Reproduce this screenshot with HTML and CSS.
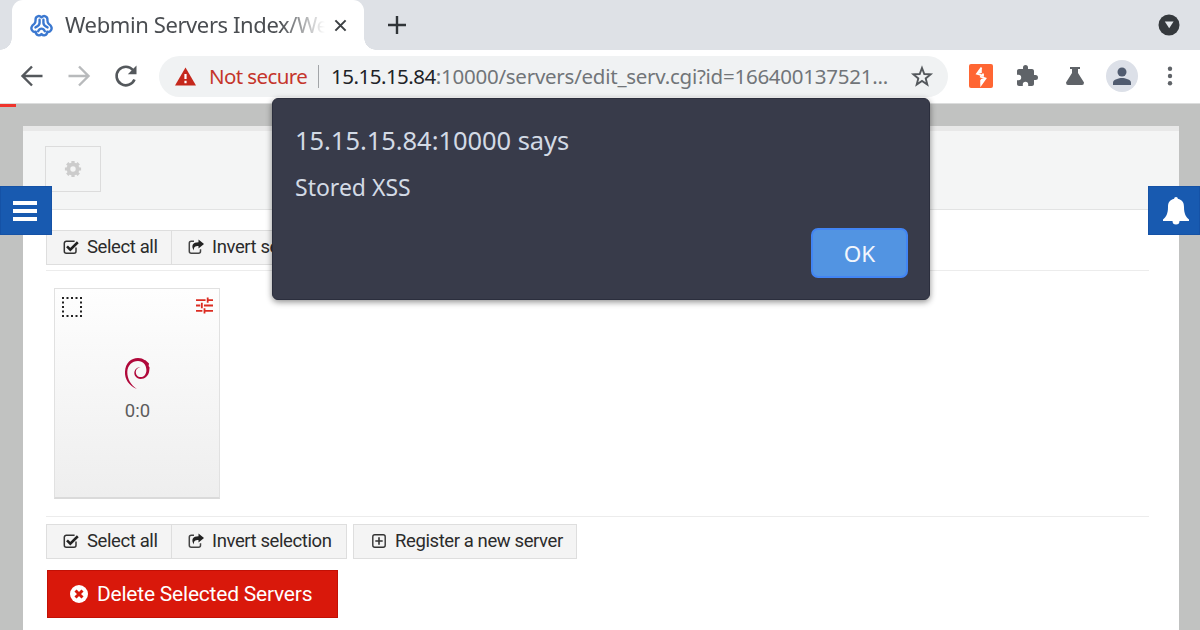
FILE: index.html
```html
<!DOCTYPE html>
<html>
<head>
<meta charset="utf-8">
<title>Webmin Servers Index</title>
<link rel="stylesheet" href="styles.css">
</head>

<body>
<!-- shared icons -->
<svg class="defs">
    <symbol id="check" viewBox="0 0 16 16"><path d="M13 8.5v3.7a2 2 0 0 1-2 2H3.3a2 2 0 0 1-2-2V4.3a2 2 0 0 1 2-2h8.3" fill="none" stroke="#333" stroke-width="1.5"/><path d="M4 7.3l3.300 3.300L14.800 3.300" fill="none" stroke="#222" stroke-width="2.600"/></symbol>
    <symbol id="share" viewBox="0 0 16 16"><path d="M6 2.300H3.300a2 2 0 0 0-2 2v7.900a2 2 0 0 0 2 2h7.200a2 2 0 0 0 2-2v-2" fill="none" stroke="#444" stroke-width="1.500"/><path d="M10.500 .5L16 5l-5.500 4.500V7C7 7 5.500 8 6 11.500 2.500 6.500 5 3.200 10.500 3.200z" fill="#222"/></symbol>
</svg>

<div id="tabs">
    <div class="tab">
        <svg class="favicon" viewBox="0 0 24 24"><g fill="none" stroke="#3b78d0" stroke-width="2.500" stroke-linecap="round" stroke-linejoin="round"><path d="M12 3.500C9.500 1 5.800 2.300 5.800 5.800c0 2.200.2 3.500-1.500 4.700C1.500 12.300.8 15 2 16.800c1 1.700 2.600 2.200 4 1.700.2 4 4 4.800 6 2.500 2 2.300 5.800 1.500 6-2.500 1.400.5 3 0 4-1.700 1.200-1.800.5-4.500-2.300-6.300-1.700-1.200-1.500-2.500-1.500-4.700C18.200 2.300 14.500 1 12 3.500z"/><path d="M10 6v3.500c0 2-1.500 3.300-4.300 4.500M14 6v3.500c0 2 1.500 3.300 4.300 4.500M8.500 18c1-2 2-2.700 3.500-2.700s2.500.7 3.500 2.700"/></g></svg>
        <div class="tabName">Webmin Servers Index/We</div>
        <svg class="close" viewBox="0 0 14 14"><path d="M1.500 1.500l11 11M12.500 1.500l-11 11" stroke="#3c4043" stroke-width="2.200"/></svg>
    </div>
    <svg class="newTab" viewBox="0 0 18 18"><path d="M9 0v18M0 9h18" stroke="#303438" stroke-width="2.400"/></svg>
    <svg class="tabSearch" viewBox="0 0 22 22"><circle cx="11" cy="11" r="10.500" fill="#35393d"/><path d="M6.800 7.500h8.800l-4.400 6.800z" fill="#e4e7eb"/></svg>
</div>

<div id="toolbar">
    <svg class="nav" viewBox="0 0 24 24"><path d="M22.500 12H3M12 2.500L2.500 12l9.500 9.500" fill="none" stroke="#54585c" stroke-width="2.400"/></svg>
    <svg class="nav" viewBox="0 0 24 24"><path d="M1.500 12H21M12 2.500l9.500 9.500-9.500 9.500" fill="none" stroke="#b8babc" stroke-width="2.400"/></svg>
    <svg class="nav" viewBox="0 0 24 24"><path d="M20.500 15.500A9.300 9.300 0 1 1 19 6" fill="none" stroke="#54585c" stroke-width="2.600"/><path d="M22.500 1.500v8.700h-8.700z" fill="#54585c"/></svg>
    <div class="address">
        <svg class="warn" viewBox="0 0 22 19"><path d="M11 0l11 19H0z" fill="#c5281c"/><path d="M11 7v5M11 14v2.500" stroke="#fff" stroke-width="2.300"/></svg>
        <span class="notSecure">Not secure</span>
        <span class="url"><b>15.15.15.84</b>:10000/servers/edit_serv.cgi?id=166400137521...</span>
        <svg class="star" viewBox="0 0 24 24"><path d="M12 4l2.300 6 6.300.4-4.900 4 1.600 6.100L12 17l-5.300 3.500 1.600-6.100-4.900-4 6.300-.4z" fill="none" stroke="#54585c" stroke-width="1.900"/></svg>
    </div>
    <div class="extensions">
        <svg class="burp" viewBox="0 0 24 24"><rect width="24" height="24" rx="2" fill="#ff6633"/><path d="M12.500 3.500L8 9.800l6 1.700v-2M11 12.500l5.500 2-4.300 6v-4.500" fill="none" stroke="#fff" stroke-width="1.800"/><path d="M12.800 3.500v5.500L8 10zM11.800 20.500V15l4.700-1z" fill="#fff"/></svg>
        <svg class="puzzle" viewBox="0 0 24 24"><path d="M20.500 11H19V7c0-1.100-.9-2-2-2h-4V3.500a2.500 2.500 0 0 0-5 0V5H4c-1.100 0-2 .9-2 2v3.800h1.500a2.700 2.700 0 0 1 0 5.400H2V20c0 1.100.9 2 2 2h3.800v-1.500a2.700 2.700 0 0 1 5.400 0V22H17c1.100 0 2-.9 2-2v-4h1.500a2.500 2.500 0 0 0 0-5z" fill="#5f6368"/></svg>
        <svg class="flask" viewBox="0 0 18 18"><path d="M4 0h10v2h-2v4l6 9.500q0 2.500-2 2.500H2Q0 18 0 15.500L6 6V2H4z" fill="#5f6368"/></svg>
        <svg class="avatar" viewBox="0 0 32 32"><circle cx="16" cy="16" r="16" fill="#dce0e8"/><circle cx="16" cy="12" r="4.500" fill="#515c70"/><path d="M7 25v-2.500C7 19.500 13 18 16 18s9 1.500 9 4.500V25z" fill="#515c70"/></svg>
        <svg class="dots" viewBox="0 0 6 20"><g fill="#5f6368"><circle cx="3" cy="2.700" r="2.200"/><circle cx="3" cy="10" r="2.200"/><circle cx="3" cy="17.300" r="2.200"/></g></svg>
    </div>
</div>

<div id="page">
    <div class="progress"></div>
    <div class="panel">
        <div class="panelHead">
            <div class="gear"><svg viewBox="0 0 20 20"><circle cx="10" cy="10" r="5.100" fill="none" stroke="#ccc" stroke-width="4.200"/><path d="M10 1v3M10 16v3M1 10h3M16 10h3M3.600 3.600l2.200 2.200M14.200 14.200l2.200 2.200M3.600 16.400l2.200-2.200M14.200 5.800l2.200-2.200" stroke="#ccc" stroke-width="3.600"/></svg></div>
        </div>
        <div class="panelBody">
            <div class="btns">
                <a class="btn select"><svg><use href="#check"/></svg><span>Select all</span></a>
                <a class="btn invert"><svg><use href="#share"/></svg><span>Invert selection</span></a>
            </div>
            <div class="servers">
                <div class="card">
                    <div class="cardTop">
                        <svg class="box" viewBox="0 0 20 20"><path d="M0 1h20M0 19h20M1 4.500v11M19 4.500v11" fill="none" stroke="#222" stroke-width="2" stroke-dasharray="2 2.500"/></svg>
                        <svg class="tune" viewBox="0 0 16 16"><path d="M0 3h9M11 3h5M0 8h4M7.500 8H16M0 13h6M8 13h8M11 .5v5M5.500 5.500v5M8 10.500v5" stroke="#dc2c22" stroke-width="1.700"/></svg>
                    </div>
                    <svg class="debian" viewBox="0 0 26 33"><path d="M13 32C5 29 .5 22 1 14.500 1.500 6 7 1 14 1c3 0 5 .8 6.500 2l1 .2 3.500 3.300-.4 2.500 1 1.500-.4 3.500C24.700 18.500 21 22 16.500 22c-4-.3-7-3.800-6-7.500.7-2.700 3-4.500 6-4.200-2.800.3-4.500 2-4.700 4.500-.2 3 2 5.300 4.700 5.300 3.500 0 6-3.100 5.900-7.200C22.200 7.500 19 4 14 4 8 4 3.500 8.500 3.300 15 3.200 22 7 28 13 32z" fill="#b0083a"/></svg>
                    <div class="serverName">0:0</div>
                </div>
            </div>
            <div class="btns">
                <a class="btn select"><svg><use href="#check"/></svg><span>Select all</span></a>
                <a class="btn invert"><svg><use href="#share"/></svg><span>Invert selection</span></a>
                <a class="btn register"><svg viewBox="0 0 16 16"><rect x="1.800" y="1.800" width="12.400" height="12.400" rx="2" fill="none" stroke="#333" stroke-width="1.400"/><path d="M8 4.300v7.400M4.300 8h7.400" stroke="#333" stroke-width="1.600"/></svg><span>Register a new server</span></a>
            </div>
            <a class="delete"><svg viewBox="0 0 18 18"><circle cx="9" cy="9" r="9" fill="#fff"/><path d="M5.500 5.500l7 7M12.500 5.500l-7 7" stroke="#d9180b" stroke-width="3"/></svg><span>Delete Selected Servers</span></a>
        </div>
    </div>
    <div class="side menu"><svg viewBox="0 0 24 20"><path d="M0 2h24M0 10h24M0 18h24" stroke="#fff" stroke-width="4"/></svg></div>
    <div class="side bell"><svg viewBox="0 0 26 28"><path d="M13 0c1.200 0 1.800.8 1.800 1.800C19.500 2.800 21 6 21 10c0 7 2 10 5 12.500V24H16.500a3.500 3.500 0 0 1-7 0H0v-1.500C3 20 5 17 5 10c0-4 1.500-7.200 6.200-8.200C11.200.8 11.800 0 13 0z" fill="#fff"/></svg></div>
</div>

<div id="alertBox">
    <div class="origin">15.15.15.84:10000 says</div>
    <div class="msg">Stored XSS</div>
    <div class="ok">OK</div>
</div>
</body>

</html>
```
FILE: styles.css
```css
body,div{margin:0;padding:0;}
*{box-sizing:border-box;}
body{width:1200px;height:630px;overflow:hidden;position:relative;background:#fff;font-family:"Noto Sans",sans-serif;}
svg{display:block;flex:none;}
span,.btn,.delete,.tabName,.origin,.msg{white-space:nowrap;}
.defs{position:absolute;width:0;height:0;}
#tabs{display:flex;align-items:center;height:50px;background:#dee1e6;padding:0 20px 0 12px;}
.tab{position:relative;display:flex;align-items:center;width:352px;height:50px;padding:0 16px 0 18px;background:#fff;border-radius:11px 11px 0 0;}
.tab:before,.tab:after{content:"";position:absolute;bottom:0;width:12px;height:12px;}
.tab:before{left:-12px;background:radial-gradient(circle at 0 0,transparent 11.5px,#fff 12px);}
.tab:after{right:-12px;background:radial-gradient(circle at 100% 0,transparent 11.5px,#fff 12px);}
.favicon{width:23px;height:23px;}
.tabName{width:262px;margin-left:12px;padding-bottom:2px;color:#4a4d51;font-size:22px;line-height:30px;letter-spacing:-.4px;-webkit-mask-image:linear-gradient(to right,#000 215px,transparent 260px);}
.close{width:13px;height:13px;margin-left:7px;}
.newTab{width:18px;height:18px;margin-left:24px;}
.tabSearch{width:22px;height:22px;margin-left:auto;}
#toolbar{display:flex;align-items:center;height:54px;padding:0 27px 1px 20px;border-bottom:1px solid #dcdddd;}
.nav{width:24px;height:24px;margin-right:23px;}
.address{display:flex;align-items:center;width:789px;height:41px;margin-left:-2px;padding:0 14px 0 16px;background:#f0f2f3;border-radius:21px;font-size:20.5px;}
.warn{width:21px;height:19px;}
.notSecure{width:110px;margin-left:13px;color:#c5352b;border-right:1px solid #a2a5a8;line-height:23px;letter-spacing:-.6px;}
.url{width:565px;margin-left:12px;color:#717579;letter-spacing:-.25px;}
.url b{font-weight:400;color:#202327;letter-spacing:-.5px;}
.star{width:24px;height:24px;margin-left:auto;}
.extensions{display:flex;align-items:center;flex:1;padding-left:21px;}
.burp{width:24px;height:24px;}
.puzzle{width:24px;height:24px;margin-left:22px;}
.flask{width:18px;height:18px;margin-left:27px;}
.avatar{width:32px;height:32px;margin-left:22px;}
.dots{width:6px;height:20px;margin-left:auto;}
#page{position:relative;height:526px;padding:22px 21px 0 23px;background:#c1c2c1;overflow:hidden;font-family:Roboto,sans-serif;}
.progress{position:absolute;left:0;top:0;width:16px;height:3px;background:#ef342c;}
.panel{height:530px;background:#fff;border-top:5px solid #e8e8e8;}
.panelHead{height:79px;padding:15px 22px;background:#f4f5f5;border-bottom:1px solid #e2e3e3;}
.gear{display:flex;align-items:center;justify-content:center;width:56px;height:46px;border:1px solid #dcdcdc;}
.gear svg{width:18px;height:18px;}
.panelBody{padding:20px 30px 0 23px;}
.btns{display:flex;}
.btn{display:flex;align-items:center;height:35px;padding:0 16px 2px;background:#f4f4f4;border:1px solid #dedede;color:#2b2b2b;font-size:18.5px;letter-spacing:-.4px;}
.btn svg{width:16px;height:16px;margin-right:8px;}
.select{width:126px;}
.invert{width:175px;border-left:0;}
.register{width:224px;margin-left:6px;padding-left:17px;}
.servers{height:247px;margin:5px 0 7px;padding:17px 8px;border-top:1px solid #ececec;border-bottom:1px solid #ececec;}
.card{width:166px;height:211px;padding:8px 6px 0 7px;border:1px solid #e1e1e1;border-bottom:2px solid #dadada;background:linear-gradient(#fefefe,#eee);}
.cardTop{display:flex;justify-content:space-between;}
.box{width:20px;height:20px;}
.tune{width:17px;height:17px;}
.debian{width:26px;height:33px;margin:40px auto 0 62px;}
.serverName{margin-top:9px;text-align:center;color:#5c5c5c;font-size:18.5px;line-height:24px;}
.delete{display:flex;align-items:center;width:291px;height:48px;margin:11px 0 0 1px;padding:0 23px 1px 22px;background:#d9180b;border:1px solid #c21005;color:#fff;font-size:21px;letter-spacing:-.22px;}
.delete svg{width:18px;height:18px;margin-right:9px;}
.side{position:absolute;top:82px;display:flex;align-items:center;width:52px;height:49px;background:#185ab0;border:1px solid #1552a6;}
.menu{left:0;padding-left:12px;}
.menu svg{width:24px;height:20px;}
.bell{right:0;padding-left:14px;}
.bell svg{width:26px;height:28px;}
#alertBox{position:absolute;left:272px;top:98px;width:658px;height:202px;padding:23px 21px 21px 22px;display:flex;flex-direction:column;background:#383b4a;border:1px solid #2b2e3d;border-radius:6px;box-shadow:0 2px 6px rgba(0,0,0,.45);color:#d3dae5;}
.origin{font-size:25.5px;line-height:36px;letter-spacing:-.05px;}
.msg{margin-top:14px;font-size:23px;line-height:30px;}
.ok{display:flex;align-items:center;justify-content:center;width:97px;height:50px;margin:auto 0 0 auto;background:#5294e2;border:2px solid #4285f4;border-radius:7px;color:#f2f6fc;font-size:22.5px;}
```
